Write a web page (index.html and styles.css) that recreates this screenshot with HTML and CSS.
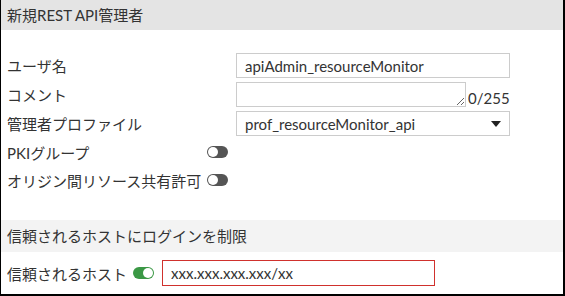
FILE: index.html
```html
<!DOCTYPE html>
<html>
<head>
    <meta charset="UTF-8">
    <title>新規REST API管理者</title>
    <link rel="stylesheet" href="styles.css">
</head>
<body>
    <div class="panel">
        <div class="panel-title">新規REST API管理者</div>

        <div class="form">
            <div class="form-row">
                <label class="form-label">ユーザ名</label>
                <input class="text-input" type="text" value="apiAdmin_resourceMonitor">
            </div>
            <div class="form-row">
                <label class="form-label">コメント</label>
                <textarea class="comment-input"></textarea>
                <span class="counter">0/255</span>
            </div>
            <div class="form-row">
                <label class="form-label">管理者プロファイル</label>
                <div class="select-box">
                    <span>prof_resourceMonitor_api</span>
                    <span class="caret"></span>
                </div>
            </div>
            <div class="form-row toggle-row">
                <label class="form-label short">PKIグループ</label>
                <span class="toggle"></span>
            </div>
            <div class="form-row toggle-row">
                <label class="form-label short">オリジン間リソース共有許可</label>
                <span class="toggle"></span>
            </div>
        </div>

        <div class="section-title">信頼されるホストにログインを制限</div>

        <div class="trusted-row">
            <label class="trusted-label">信頼されるホスト</label>
            <span class="toggle on"></span>
            <input class="text-input host-input" type="text" value="xxx.xxx.xxx.xxx/xx">
        </div>
    </div>
</body>
</html>
```

FILE: styles.css
```css
body {
    margin: 0;
    padding: 0;
    font-family: 'Lato', 'Noto Sans CJK JP', sans-serif;
    font-size: 15px;
    color: #333;
    background: #fff;
}
.panel {
    width: 565px;
    height: 296px;
    box-sizing: border-box;
    border-left: 1px solid #000;
    border-right: 2px solid #000;
    border-bottom: 2px solid #000;
    overflow: hidden;
}
.panel-title {
    height: 30px;
    line-height: 30px;
    padding-left: 6px;
    background-color: #e4e4e4;
}
.form {
    padding: 23px 0 0 6px;
    height: 167px;
}
.form-row {
    display: flex;
    align-items: center;
    height: 25px;
    margin-bottom: 4px;
}
.form-label {
    width: 229px;
    flex: none;
    white-space: nowrap;
}
.form-label.short {
    width: 200px;
}
.toggle-row {
    height: 24px;
}
.text-input {
    width: 274px;
    height: 25px;
    box-sizing: border-box;
    border: 1px solid #ccc;
    padding: 0 8px;
    font-family: inherit;
    font-size: 15px;
    color: #333;
    outline: none;
}
.comment-input {
    width: 230px;
    height: 25px;
    box-sizing: border-box;
    border: 1px solid #ccc;
    font-family: inherit;
    margin: 0;
    outline: none;
}
.counter {
    align-self: flex-end;
    margin-left: 2px;
    line-height: 18px;
}
.select-box {
    width: 274px;
    height: 25px;
    box-sizing: border-box;
    border: 1px solid #ccc;
    padding: 0 8px;
    display: flex;
    align-items: center;
    justify-content: space-between;
}
.caret {
    width: 0;
    height: 0;
    border-left: 5px solid transparent;
    border-right: 5px solid transparent;
    border-top: 6px solid #222;
}
.toggle {
    position: relative;
    display: inline-block;
    width: 21px;
    height: 12px;
    border-radius: 6px;
    background-color: #555;
    flex: none;
}
.toggle::after {
    content: "";
    position: absolute;
    top: 1px;
    left: 1px;
    width: 10px;
    height: 10px;
    border-radius: 50%;
    background: #fff;
}
.toggle.on {
    background-color: #3b9845;
}
.toggle.on::after {
    left: 10px;
}
.section-title {
    height: 32px;
    line-height: 32px;
    padding-left: 6px;
    background-color: #f3f3f3;
}
.trusted-row {
    display: flex;
    align-items: center;
    padding: 8px 0 0 6px;
}
.trusted-label {
    margin-right: 6px;
}
.host-input {
    width: 273px;
    height: 26px;
    margin-left: 8px;
    border: 1px solid #d0312d;
}
```
